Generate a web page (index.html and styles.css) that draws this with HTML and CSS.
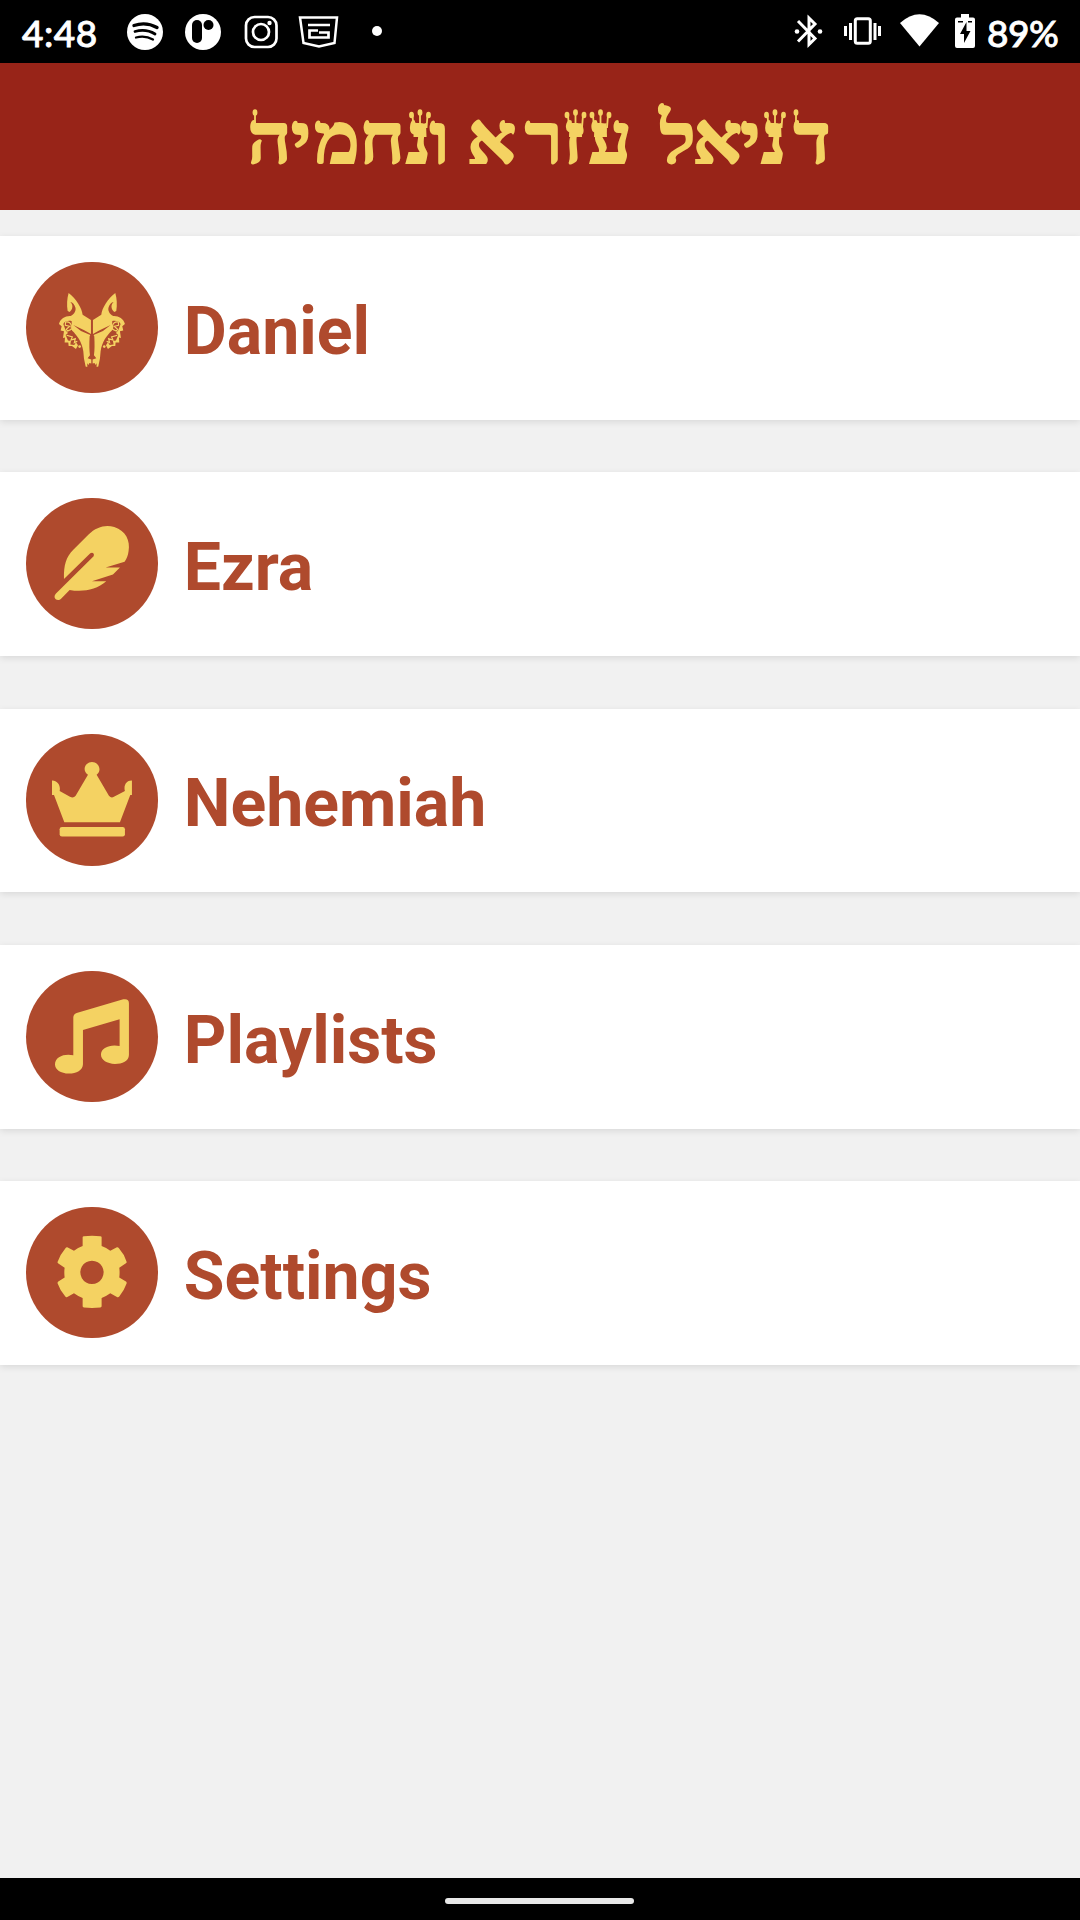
FILE: index.html
```html
<!DOCTYPE html>
<html lang="en">
<head>
<meta charset="utf-8">
<title>דניאל עזרא ונחמיה</title>
<link rel="stylesheet" href="styles.css">
</head>
<body>
<div class="status">
  <span class="clock">4:48</span>
  <svg class="notices" viewBox="0 0 270 63">
    <circle cx="25" cy="32" r="18" fill="#fff"/>
    <g fill="none" stroke="#000" stroke-linecap="round">
      <path d="M14 25.500Q26 21.500 37 27.500" stroke-width="3.400"/>
      <path d="M15 31.500Q26 28.500 35 34" stroke-width="2.800"/>
      <path d="M16 37.500Q25 35 33 39.500" stroke-width="2.300"/>
    </g>
    <circle cx="83" cy="32" r="18" fill="#fff"/>
    <rect x="72" y="20" width="10" height="23" rx="5"/>
    <circle cx="88.500" cy="25" r="5"/>
    <g fill="none" stroke="#fff" stroke-width="2.700">
      <rect x="126" y="17" width="30.500" height="30" rx="8.500"/>
      <circle cx="141" cy="32" r="8"/>
      <path d="M180 17.500H217L214.500 43L199 46.500L183.500 43Z" stroke-width="2.500"/>
      <path d="M188 25H210M198 30.500H189.500V37.500H208.500V32.500H199" stroke-width="2.700"/>
    </g>
    <circle cx="149.500" cy="23" r="2.200" fill="#fff"/>
    <circle cx="257" cy="31" r="5" fill="#fff"/>
  </svg>
  <svg class="system" viewBox="0 0 190 63">
    <g fill="none" stroke="#fff" stroke-width="3">
      <path d="M8 21L25 38.500L19 44.500V18L25 24L8 41.500"/>
      <rect x="65.300" y="18.800" width="15" height="24.400" rx="2"/>
      <path d="M60.500 23V40M55.500 26V36M85 23V40M89.500 26V36"/>
    </g>
    <circle cx="7" cy="31.500" r="2.300" fill="#fff"/>
    <circle cx="30" cy="31.500" r="2.300" fill="#fff"/>
    <path d="M110 23Q129.500 5.500 149 23L129.500 46.500Z" fill="#fff"/>
    <path d="M171 14H179V17.500H183Q185 17.500 185 19.500V46Q185 48 183 48H167Q165 48 165 46V19.500Q165 17.500 167 17.500H171Z" fill="#fff"/>
    <path d="M168 21H173V22.500H168ZM178 21H182V22.500H178ZM176.500 22L170 34H174V43L180.500 31H176.500Z"/>
  </svg>
  <span class="battery">89%</span>
</div>
<header class="header">
  <svg class="title" viewBox="240 63 600 147">
    <g class="words" direction="rtl" transform="scale(1.08 1)">
      <text y="163" x="769 728 704 687 644">דניאל</text>
      <text y="163" x="585 541 521 478">עזרא</text>
      <text y="163" x="416 399 375 333 288 270">ונחמיה</text>
    </g>
    <defs>
      <g id="tag">
        <path d="M-6.500 18L-7.500 5M0 18V2M6.500 18L7.500 5" stroke="#f4d262" stroke-width="1.800"/>
        <ellipse cx="-8.500" cy="5" rx="2.400" ry="3.200"/>
        <ellipse cy="2.500" rx="2.400" ry="3.200"/>
        <ellipse cx="8.500" cy="5" rx="2.400" ry="3.200"/>
        <path d="M-6 13L0 15L6 13L6.500 27H-6.500Z"/>
      </g>
      <g id="pin">
        <path d="M0 14V2" stroke="#f4d262" stroke-width="1.800"/>
        <ellipse cy="2.500" rx="2.400" ry="3.200"/>
      </g>
    </defs>
    <use href="#tag" x="420" y="110"/>
    <use href="#tag" x="575.500" y="110"/>
    <use href="#tag" x="600.500" y="110"/>
    <use href="#tag" x="775" y="110"/>
    <use href="#pin" x="255" y="110"/>
    <use href="#pin" x="796" y="110"/>
  </svg>
</header>
<main class="menu">
  <a class="card">
    <svg class="icon" viewBox="0 0 394 394">
      <defs>
        <g id="half">
          <path d="M128 93C150 109 168 139 170 158L195 174V216L175 205L142 189L165 207L193 219L191 224Q189 260 192 280L185 289L196 293V305L190 303L188 309L184 304V315L179 314L174 290L172 268C168 240 153 220 138 206L137 177C125 175 116 178 112 186L119 205L126 213L119 219L126 236L135 237L133 248L145 249L150 241L156 250L150 261L138 252L128 252L127 242L116 242L117 227L111 228L114 208L104 206L107 193L99 186C103 169 119 161 134 162C146 157 151 145 148 136C146 128 140 121 133 120C144 130 139 143 131 150L125 147C122 129 123 109 128 93Z"/>
          <path d="M119 180Q132 178 136 190V202L125 207L121 202L131 193L118 190ZM122 220L139 225L135 234L148 230L145 242L154 238" fill="none" stroke="#f4d262" stroke-width="3.500"/>
          <circle cx="161" cy="254" r="4"/>
        </g>
      </defs>
      <use href="#half"/>
      <use href="#half" transform="translate(396) scale(-1 1)"/>
    </svg>
    <span class="label">Daniel</span>
  </a>
  <a class="card">
    <svg class="icon" viewBox="0 0 394 394">
      <path d="M114 243C113 200 120 178 142 155L187 110C212 86 239 79 265 87C300 99 313 128 308 159C306 173 303 181 296 191L239 209H282L261 230L198 250H241C211 276 170 283 131 276L106 302C94 314 78 300 90 287L203 175C207 165 198 162 193 166Z"/>
    </svg>
    <span class="label">Ezra</span>
  </a>
  <a class="card">
    <svg class="icon" viewBox="0 0 394 394">
      <path d="M78 140C93 139 105 154 101 171L132 188Q142 194 149 185L186 122C166 108 179 84 198 84C219 84 229 110 212 122L249 185Q256 194 264 188L297 171C292 155 302 139 318 140V183H313L282 265H115L84 183H78Z"/>
      <rect x="101" y="279" width="196" height="29" rx="7"/>
    </svg>
    <span class="label">Nehemiah</span>
  </a>
  <a class="card">
    <svg class="icon" viewBox="0 0 394 394">
      <path d="M142 140Q142 129 152 126L292 85Q309 82 309 97V252C309 270 289 279 267 279C243 279 225 267 225 251C225 230 253 219 281 225V145L171 177V280C171 298 151 308 129 308C104 308 87 296 87 280C87 257 116 247 142 253Z"/>
    </svg>
    <span class="label">Playlists</span>
  </a>
  <a class="card">
    <svg class="icon" viewBox="0 0 394 394">
      <path fill-rule="evenodd" d="M170 91Q170 88 174 88Q198 84 223 88Q227 88 227 91V117Q241 122 253 131L273 121Q276 120 279 124Q295 142 302 164Q303 167 300 169L280 182Q282 196 280 212L300 224Q303 226 302 230Q295 250 280 269Q277 272 273 270L253 259Q241 268 227 273V298Q227 301 223 302Q198 304 174 302Q170 301 170 298V273Q156 268 144 259L124 270Q121 272 118 269Q102 251 95 230Q94 226 97 224L116 212Q114 196 116 182L96 169Q94 167 95 164Q103 142 119 123Q121 120 124 121L144 131Q156 122 170 117ZM198 161a35 35 0 1 0 .1 0Z"/>
    </svg>
    <span class="label">Settings</span>
  </a>
</main>
<footer class="nav"><span class="handle"></span></footer>
</body>
</html>
```
FILE: styles.css
```css
* { box-sizing: border-box; }
body {
  margin: 0;
  width: 1080px;
  height: 1920px;
  display: flex;
  flex-direction: column;
  background: #f1f1f1;
  font-family: Roboto, sans-serif;
  overflow: hidden;
}
.status {
  height: 63px;
  flex: none;
  display: flex;
  align-items: center;
  padding-left: 22px;
  background: #000;
  color: #fff;
  font: 500 37px/63px Lato, sans-serif;
  -webkit-text-stroke: 0.8px #fff;
}
.clock { width: 98px; padding-top: 1px; letter-spacing: 0.5px; }
.notices { width: 270px; height: 63px; }
.system { width: 190px; height: 63px; margin-left: 400px; }
.battery { margin-left: 7px; padding-top: 1px; letter-spacing: -0.5px; }
.header {
  height: 147px;
  flex: none;
  display: flex;
  justify-content: center;
  background: #982418;
}
.title {
  width: 600px;
  height: 147px;
  fill: #f4d262;
  font: bold 71px "Liberation Serif", serif;
}
.words { stroke: #f4d262; stroke-width: 2px; }
.menu {
  flex: 1;
  display: flex;
  flex-direction: column;
  gap: 52.5px;
  padding-top: 26px;
}
.card {
  height: 183.750px;
  flex: none;
  display: flex;
  align-items: center;
  gap: 26.250px;
  padding: 0 0 1px 26.250px;
  background: #fff;
  box-shadow: 0 2px 7px rgba(0, 0, 0, 0.1);
}
.icon {
  width: 131.250px;
  height: 131.250px;
  border-radius: 50%;
  background: #af4a2d;
  fill: #f4d262;
}
.label {
  padding-top: 9px;
  color: #af4a2d;
  font-size: 66.200px;
  font-weight: 700;
  line-height: 78px;
}
.nav {
  height: 42px;
  flex: none;
  display: flex;
  justify-content: center;
  align-items: center;
  padding: 4px 2px 0 0;
  background: #000;
}
.handle { width: 189px; height: 6px; border-radius: 3px; background: #e8e8e8; }
```
